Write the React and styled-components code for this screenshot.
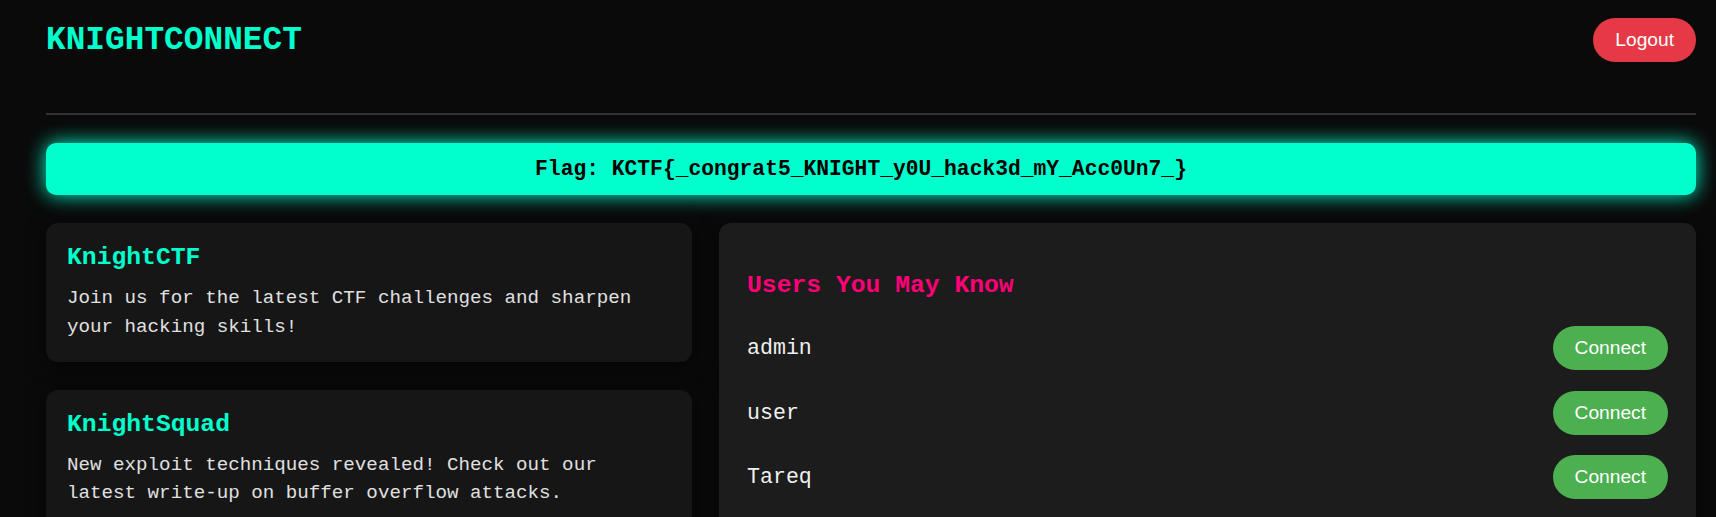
import React from "react";
import styled, { createGlobalStyle } from "styled-components";

const GlobalStyle = createGlobalStyle`
  html, body {
    margin: 0;
    padding: 0;
    background: #0a0a0a;
  }
  body {
    font-family: "Liberation Mono", "Courier New", monospace;
    color: #e0e0e0;
  }
`;

const posts = [
  {
    id: 1,
    title: "KnightCTF",
    body: "Join us for the latest CTF challenges and sharpen your hacking skills!",
  },
  {
    id: 2,
    title: "KnightSquad",
    body: "New exploit techniques revealed! Check out our latest write-up on buffer overflow attacks.",
  },
];

const users = ["admin", "user", "Tareq"];

const Page = styled.div`
  min-height: 100vh;
  padding: 18px 20px 0 46px;
  box-sizing: border-box;
`;

const Header = styled.header`
  display: flex;
  justify-content: space-between;
  align-items: center;
  padding-bottom: 51px;
  border-bottom: 2px solid #333;
`;

const Logo = styled.h1`
  margin: 0;
  font-size: 32.8px;
  font-weight: bold;
  color: #00ffcc;
`;

const PillButton = styled.button`
  border: none;
  border-radius: 22px;
  padding: 11px 22px;
  font-family: "Liberation Sans", Arial, sans-serif;
  font-size: 19.2px;
  line-height: 22px;
  color: #fff;
  background: ${(p) => p.$bg};
  cursor: pointer;
`;

const FlagBox = styled.div`
  margin-top: 28px;
  padding: 14px 30px 14px 10px;
  border-radius: 10px;
  background: #00ffcc;
  box-shadow: 0 0 20px #00ffcc;
  color: #000;
  font-weight: bold;
  font-size: 21.3px;
  text-align: center;
`;

const Main = styled.main`
  display: grid;
  grid-template-columns: 646px 1fr;
  gap: 27px;
  margin-top: 28px;
  align-items: start;
`;

const Feed = styled.section`
  display: flex;
  flex-direction: column;
  gap: 28px;
`;

const Card = styled.article`
  background: #161616;
  border-radius: 12px;
  padding: 20px 21px;
  box-shadow: 0 4px 20px rgba(0, 0, 0, 0.6);
`;

const CardTitle = styled.h3`
  margin: 0 0 13px;
  font-size: 24.7px;
  font-weight: bold;
  color: #00ffcc;
`;

const CardText = styled.p`
  margin: 0;
  font-size: 19.2px;
  line-height: 1.5;
  color: #e0e0e0;
`;

const Panel = styled.aside`
  background: #1c1c1c;
  border-radius: 12px;
  padding: 48px 28px 28px;
  min-height: 320px;
  box-shadow: 0 4px 20px rgba(0, 0, 0, 0.6);
`;

const PanelTitle = styled.h2`
  margin: 0 0 17px;
  font-size: 24.7px;
  font-weight: bold;
  color: #ff0077;
`;

const UserRow = styled.div`
  display: flex;
  justify-content: space-between;
  align-items: center;
  padding: 10px 0 10.5px;
`;

const UserName = styled.span`
  font-size: 21.6px;
  color: #f0f0f0;
`;

export default function App() {
  return (
    <>
      <GlobalStyle />
      <Page>
        <Header>
          <Logo>KNIGHTCONNECT</Logo>
          <PillButton $bg="#e63946">Logout</PillButton>
        </Header>
        <FlagBox>Flag: KCTF{"{"}_congrat5_KNIGHT_y0U_hack3d_mY_Acc0Un7_{"}"}</FlagBox>
        <Main>
          <Feed>
            {posts.map((post) => (
              <Card key={post.id}>
                <CardTitle>{post.title}</CardTitle>
                <CardText>{post.body}</CardText>
              </Card>
            ))}
          </Feed>
          <Panel>
            <PanelTitle>Users You May Know</PanelTitle>
            {users.map((name) => (
              <UserRow key={name}>
                <UserName>{name}</UserName>
                <PillButton $bg="#4caf50">Connect</PillButton>
              </UserRow>
            ))}
          </Panel>
        </Main>
      </Page>
    </>
  );
}
